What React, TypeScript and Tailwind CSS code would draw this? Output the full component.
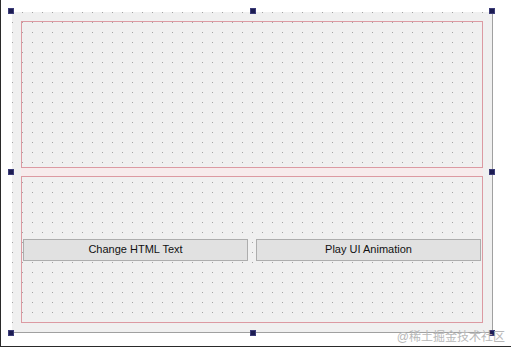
export default function App() {
  const handles = [
    'left-[-4px] top-[-4px]',
    'left-[238px] top-[-4px]',
    'right-[-3px] top-[-4px]',
    'left-[-4px] top-[157px]',
    'right-[-3px] top-[157px]',
    'left-[-4px] bottom-[-4px]',
    'left-[238px] bottom-[-4px]',
    'right-[-3px] bottom-[-4px]',
  ];

  return (
    <div
      className="relative w-[511px] h-[347px] overflow-hidden bg-white border-l border-b border-[#2a2a2a] pl-[11px] pt-[12px]"
      style={{ fontFamily: '"Liberation Sans", Arial, sans-serif' }}
    >
      {/* Form */}
      <div className="relative w-[481px] h-[321px] bg-[#f0f0f0] border-r border-b border-[#a0a0a0] p-[9px] flex flex-col gap-[8px] bg-[radial-gradient(circle_at_0.5px_0.5px,#a4a4a4_0.6px,transparent_0.9px)] bg-[length:10px_10px]">
        {/* Top layout */}
        <div className="h-[147px] border border-[#dc9aa2]" />
        {/* gap fill */}
        <div className="-my-[8px] h-[8px] bg-[#f7ebec]" />
        {/* Bottom layout */}
        <div className="h-[147px] border border-[#dc9aa2] px-[1px] flex items-center gap-[8px]">
          <button className="flex-1 h-[22px] bg-[#e1e1e1] border border-[#adadad] text-[11px] text-[#111]">
            Change HTML Text
          </button>
          <button className="flex-1 h-[22px] bg-[#e1e1e1] border border-[#adadad] text-[11px] text-[#111]">
            Play UI Animation
          </button>
        </div>

        {handles.map((h) => (
          <div key={h} className={`absolute w-[6px] h-[6px] bg-[#1c1c52] border border-[#3c3c78] ${h}`} />
        ))}
      </div>

      {/* Watermark */}
      <div
        className="absolute right-[6px] bottom-[2px] text-[12px] leading-[14px] text-[#b8b8b8]"
        style={{ fontFamily: '"Liberation Sans", "Noto Sans CJK SC", sans-serif' }}
      >
        @稀土掘金技术社区
      </div>
    </div>
  );
}
